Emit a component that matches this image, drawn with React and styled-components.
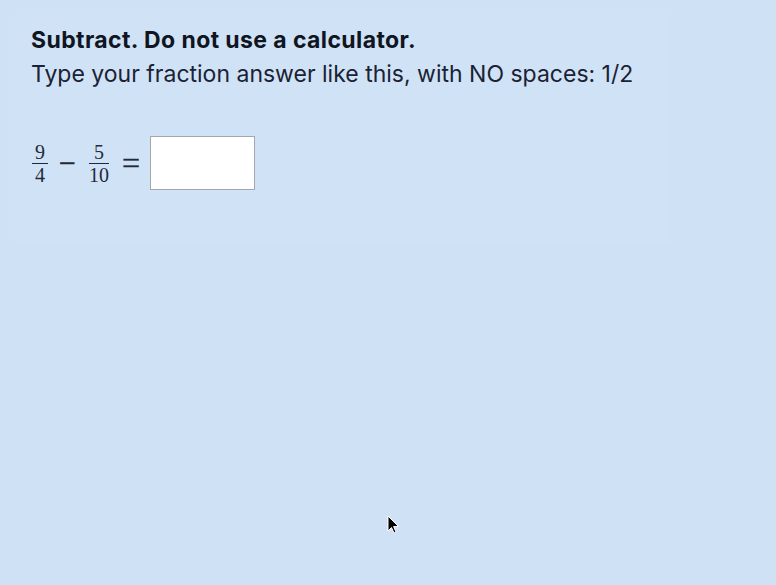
import styled, { createGlobalStyle } from "styled-components"

const Global = createGlobalStyle`
  html, body {
    margin: 0;
    padding: 0;
    background: #cfe1f5;
  }
  body {
    font-family: Inter, "Liberation Sans", sans-serif;
    color: #111827;
  }
`;

const Page = styled.div`
  width: 776px;
  height: 585px;
  padding: 15px;
  box-sizing: border-box;
  position: relative;
`;

const Panel = styled.div`
  width: 655px;
  height: 230px;
  box-sizing: border-box;
  padding: 11px 16px;
  background: #d0e2f6;
`;

const Title = styled.h1`
  margin: 0;
  font-size: 23px;
  line-height: 28px;
  font-weight: 700;
  letter-spacing: 0.4px;
  color: #0f1521;
`;

const Hint = styled.p`
  margin: 6px 0 0;
  font-size: 23px;
  line-height: 28px;
  color: #1a2233;
`;

const Equation = styled.div`
  display: flex;
  align-items: center;
  margin-top: 48px;
  padding-left: 1px;
  font-family: "Liberation Serif", serif;
  color: #1f2a3a;
`;

const Frac = styled.span`
  display: inline-flex;
  flex-direction: column;
  align-items: center;
  font-size: 20px;
  line-height: 20px;
`;

const Num = styled.span`
  border-bottom: 1.3px solid #1f2a3a;
  padding: 0 3px 1px;
  align-self: stretch;
  text-align: center;
`;

const Den = styled.span`
  padding-top: 1px;
`;

const Op = styled.span`
  font-size: ${(p) => p.size || 28}px;
  margin: 0 ${(p) => p.right || 11}px 0 ${(p) => p.left || 11}px;
  line-height: 1;
  -webkit-text-stroke: 0.4px #1f2a3a;
`;

const Answer = styled.input`
  width: 105px;
  height: 54px;
  box-sizing: border-box;
  border: 1px solid #a3a8ae;
  background: #fff;
  margin: 0;
  font-size: 18px;
`;

const Cursor = styled.svg`
  position: absolute;
  left: 387px;
  top: 515px;
`;

const App = () => {
  return (
    <Page>
      <Global />
      <Panel>
        <Title>Subtract. Do not use a calculator.</Title>
        <Hint>Type your fraction answer like this, with NO spaces: 1/2</Hint>
        <Equation>
          <Frac><Num>9</Num><Den>4</Den></Frac>
          <Op size={30} left={11} right={13}>−</Op>
          <Frac><Num>5</Num><Den>10</Den></Frac>
          <Op size={32} left={13} right={10}>=</Op>
          <Answer type="text" />
        </Equation>
      </Panel>
      <Cursor width="14" height="20" viewBox="0 0 14 20">
        <path d="M1 1 L1 16 L4.5 12.5 L7 18 L9 17 L6.6 11.6 L11.5 11.5 Z" fill="#000" stroke="#fff" strokeWidth="1" />
      </Cursor>
    </Page>
  )
}

export default App
